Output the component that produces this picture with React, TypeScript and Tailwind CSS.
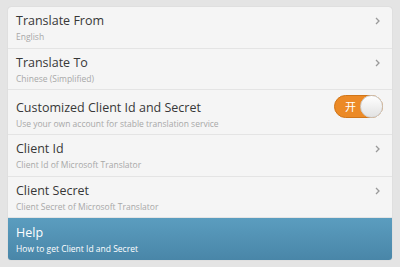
import React from 'react';

type Row = { title: string; sub: string; kind: 'nav' | 'toggle'; h: string };

const rows: Row[] = [
  { title: 'Translate From', sub: 'English', kind: 'nav', h: 'h-[42px]' },
  { title: 'Translate To', sub: 'Chinese (Simplified)', kind: 'nav', h: 'h-[41px]' },
  { title: 'Customized Client Id and Secret', sub: 'Use your own account for stable translation service', kind: 'toggle', h: 'h-[45px]' },
  { title: 'Client Id', sub: 'Client Id of Microsoft Translator', kind: 'nav', h: 'h-[42px]' },
  { title: 'Client Secret', sub: 'Client Secret of Microsoft Translator', kind: 'nav', h: 'h-[41px]' },
];

const Chevron = () => (
  <svg width="5" height="8" viewBox="0 0 5 8" className="shrink-0 mt-[10px]">
    <path d="M1 1 L4 4 L1 7" fill="none" stroke="#9a9a9a" strokeWidth="1.3" />
  </svg>
);

const Toggle = () => (
  <div className="relative w-[49px] h-[23px] rounded-full bg-[#ec8a26] border border-[#d07518] flex items-center shrink-0 mt-[5px]">
    <span className="ml-[10px] text-[11px] text-white leading-none">开</span>
    <div className="absolute right-[-1px] top-[-1px] w-[23px] h-[23px] rounded-full bg-gradient-to-b from-white to-[#e2e2e2] border border-[#cccccc]" />
  </div>
);

const App: React.FC = () => {
  return (
    <div
      className="w-[400px] h-[267px] bg-[#e4e4e4] pt-[7px] px-[8px] overflow-hidden"
      style={{ fontFamily: '"Open Sans", "Noto Sans CJK SC", sans-serif' }}
    >
      <div className="rounded-[3px] bg-[#f5f5f5] overflow-hidden shadow-[0_0_1px_rgba(0,0,0,0.2)]">
        {rows.map((r) => (
          <div
            key={r.title}
            className={`flex items-start justify-between pl-[8px] border-b border-[#e4e4e4] ${r.h} ${
              r.kind === 'toggle' ? 'pr-[9px]' : 'pr-[12px]'
            }`}
          >
            <div className={`flex flex-col ${r.kind === 'toggle' ? 'pt-[9px]' : 'pt-[5px]'}`}>
              <span className="text-[12.5px] text-[#383838] leading-[18px]">{r.title}</span>
              <span className="text-[8.5px] text-[#a8a8a8] leading-[12px] mt-[1px]">{r.sub}</span>
            </div>
            {r.kind === 'nav' ? <Chevron /> : <Toggle />}
          </div>
        ))}
        <div className="h-[42px] bg-gradient-to-b from-[#5b9dbf] to-[#4986a8] pl-[8px] pt-[6px] flex flex-col">
          <span className="text-[12.5px] text-white leading-[18px]">Help</span>
          <span className="text-[8.5px] text-white leading-[12px] mt-[1px]">How to get Client Id and Secret</span>
        </div>
      </div>
    </div>
  );
};

export default App;
